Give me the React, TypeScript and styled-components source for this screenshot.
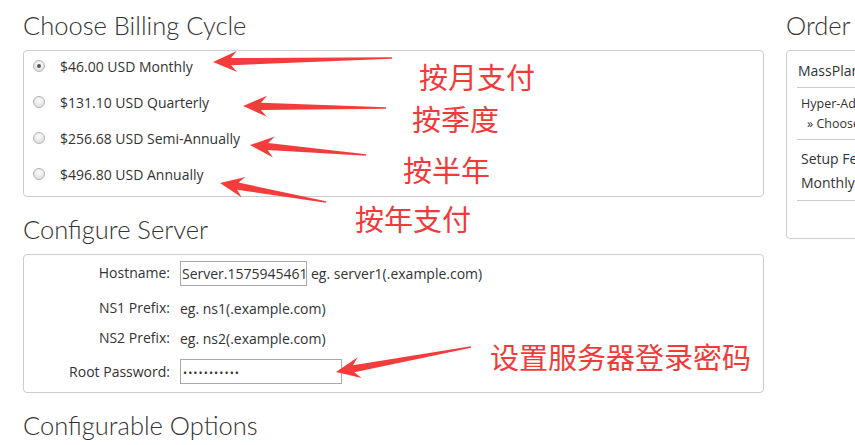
import React from "react";
import styled, { createGlobalStyle } from "styled-components";

const Global = createGlobalStyle`
  html, body { margin: 0; padding: 0; background: #fff; }
  body { font-family: "Open Sans", "Liberation Sans", sans-serif; color: #333; overflow: hidden; }
  * { box-sizing: border-box; }
`;

const Page = styled.div`
  position: relative;
  width: 855px;
  height: 445px;
  overflow: hidden;
  display: grid;
  grid-template-columns: 741px 120px;
  column-gap: 22px;
  padding: 10px 0 0 23px;
`;

const Column = styled.div`
  display: flex;
  flex-direction: column;
`;

const Heading = styled.h2<{ $mb?: number }>`
  margin: 0 0 ${(p) => p.$mb ?? 9}px 0;
  font-family: "Lato", "Open Sans", sans-serif;
  font-weight: 300;
  font-size: 25.5px;
  line-height: 31px;
  color: #333;
  white-space: nowrap;
`;

const Panel = styled.div<{ $pad?: string; $h?: number }>`
  border: 1px solid #ccc;
  border-radius: 4px;
  padding: ${(p) => p.$pad ?? "0"};
  ${(p) => (p.$h ? `height: ${p.$h}px;` : "")}
  margin-bottom: 17px;
`;

const RadioList = styled.div`
  display: flex;
  flex-direction: column;
  gap: 4px;
  padding: 0 0 5px 9px;
`;

const RadioRow = styled.label`
  display: flex;
  align-items: center;
  height: 32px;
  margin-top: -1px;
  margin-bottom: 1px;
  font-size: 14px;
  color: #333;
`;

const RadioDot = styled.span<{ $checked?: boolean }>`
  width: 12px;
  height: 12px;
  border-radius: 50%;
  border: 1px solid #b4b4b4;
  background: radial-gradient(circle at 50% 35%, #fdfdfd 0%, #e6e6e6 60%, #d6d6d6 100%);
  margin-right: 15px;
  display: flex;
  align-items: center;
  justify-content: center;
  &::after {
    content: "";
    width: 4px;
    height: 4px;
    border-radius: 50%;
    background: #555;
    display: ${(p) => (p.$checked ? "block" : "none")};
  }
`;

const FormGrid = styled.div`
  display: grid;
  grid-template-columns: 146px auto;
  column-gap: 10px;
  align-items: center;
  font-size: 14px;
`;

const FieldLabel = styled.div<{ $h: number }>`
  text-align: right;
  height: ${(p) => p.$h}px;
  line-height: ${(p) => p.$h}px;
  color: #333;
  white-space: nowrap;
`;

const FieldValue = styled.div<{ $h: number }>`
  display: flex;
  align-items: center;
  gap: 4px;
  height: ${(p) => p.$h}px;
  white-space: nowrap;
`;

const TextBox = styled.div<{ $w: number }>`
  width: ${(p) => p.$w}px;
  height: 25px;
  border: 1px solid #a9a9a9;
  padding: 0 1px;
  line-height: 23px;
  font-size: 14px;
  color: #333;
  overflow: hidden;
  white-space: nowrap;
`;

const Dots = styled.span`
  font-size: 11px;
  letter-spacing: 1.05px;
  padding-left: 1px;
`;

const SummaryRow = styled.div<{ $small?: boolean; $indent?: number; $h: number }>`
  font-size: ${(p) => (p.$small ? 12.5 : 14)}px;
  height: ${(p) => p.$h}px;
  line-height: ${(p) => p.$h}px;
  padding-left: ${(p) => p.$indent ?? 0}px;
  white-space: nowrap;
  color: #333;
`;

const SummaryBlock = styled.div<{ $pad: string }>`
  border-bottom: 1px solid #ccc;
  padding: ${(p) => p.$pad};
`;

const Summary = styled.div`
  padding: 0 0 0 10px;
`;

const Overlay = styled.svg`
  position: absolute;
  left: 0;
  top: 0;
  pointer-events: none;
`;

const Note = styled.div<{ $x: number; $y: number }>`
  position: absolute;
  left: ${(p) => p.$x}px;
  top: ${(p) => p.$y}px;
  font-family: "Noto Sans CJK SC", "Noto Sans", sans-serif;
  font-size: 29px;
  line-height: 32px;
  color: #f23a3a;
  white-space: nowrap;
`;

type Pt = [number, number];

function arrowPoints(tip: Pt, tail: Pt): string {
  const dx = tail[0] - tip[0];
  const dy = tail[1] - tip[1];
  const len = Math.hypot(dx, dy);
  const ux = dx / len, uy = dy / len;
  const nx = -uy, ny = ux;
  const L = 24, W = 10.5, notch = 18, sw = 3.6, tw = 0.8;
  const p = (a: number, b: number): Pt => [tip[0] + ux * a + nx * b, tip[1] + uy * a + ny * b];
  const pts: Pt[] = [
    tip,
    p(L, W),
    p(notch, sw),
    [tail[0] + nx * tw, tail[1] + ny * tw],
    [tail[0] - nx * tw, tail[1] - ny * tw],
    p(notch, -sw),
    p(L, -W),
  ];
  return pts.map((q) => `${q[0].toFixed(1)},${q[1].toFixed(1)}`).join(" ");
}

const arrows: [Pt, Pt][] = [
  [[213, 62], [392, 58]],
  [[243, 106], [386, 108]],
  [[250, 145], [366, 155]],
  [[220, 183], [326, 202]],
  [[336, 372], [471, 347]],
];

const cycles = [
  { label: "$46.00 USD Monthly", checked: true },
  { label: "$131.10 USD Quarterly" },
  { label: "$256.68 USD Semi-Annually" },
  { label: "$496.80 USD Annually" },
];

export default function App() {
  return (
    <>
      <Global />
      <Page>
        <Column>
          <Heading $mb={9}>Choose Billing Cycle</Heading>
          <Panel>
            <RadioList>
              {cycles.map((c) => (
                <RadioRow key={c.label}>
                  <RadioDot $checked={c.checked} />
                  {c.label}
                </RadioRow>
              ))}
            </RadioList>
          </Panel>
          <Heading $mb={9}>Configure Server</Heading>
          <Panel>
            <FormGrid>
              <FieldLabel $h={36}>Hostname:</FieldLabel>
              <FieldValue $h={36}>
                <TextBox $w={127}>Server.1575945461</TextBox>
                <span>eg. server1(.example.com)</span>
              </FieldValue>
              <FieldLabel $h={34}>NS1 Prefix:</FieldLabel>
              <FieldValue $h={34}>eg. ns1(.example.com)</FieldValue>
              <FieldLabel $h={26}>NS2 Prefix:</FieldLabel>
              <FieldValue $h={26}>eg. ns2(.example.com)</FieldValue>
              <FieldLabel $h={41}>Root Password:</FieldLabel>
              <FieldValue $h={41}>
                <TextBox $w={162}>
                  <Dots>•••••••••••</Dots>
                </TextBox>
              </FieldValue>
            </FormGrid>
          </Panel>
          <Heading>Configurable Options</Heading>
        </Column>
        <Column>
          <Heading $mb={9}>Order</Heading>
          <Panel $h={189}>
            <Summary>
              <SummaryBlock $pad="6px 0 2px 1px">
                <SummaryRow $h={28}>MassPlan</SummaryRow>
              </SummaryBlock>
              <SummaryBlock $pad="6px 0 5px 4px">
                <SummaryRow $small $h={20}>Hyper-Advanced</SummaryRow>
                <SummaryRow $small $indent={6} $h={20}>» Choose</SummaryRow>
              </SummaryBlock>
              <SummaryBlock $pad="7px 0 5px 4px">
                <SummaryRow $h={24}>Setup Fee</SummaryRow>
                <SummaryRow $h={24}>Monthly</SummaryRow>
              </SummaryBlock>
            </Summary>
          </Panel>
        </Column>
        <Overlay width={855} height={445} viewBox="0 0 855 445">
          {arrows.map(([tip, tail], i) => (
            <polygon key={i} points={arrowPoints(tip, tail)} fill="#f43c3c" />
          ))}
        </Overlay>
        <Note $x={419} $y={60}>按月支付</Note>
        <Note $x={412} $y={102}>按季度</Note>
        <Note $x={403} $y={153}>按半年</Note>
        <Note $x={355} $y={202}>按年支付</Note>
        <Note $x={490} $y={340}>设置服务器登录密码</Note>
      </Page>
    </>
  );
}
